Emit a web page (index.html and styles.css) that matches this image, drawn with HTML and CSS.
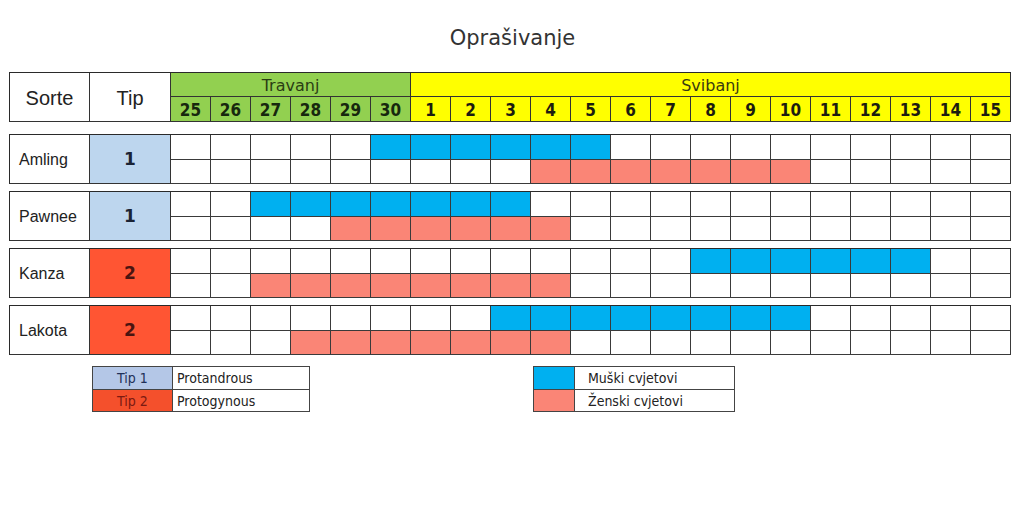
FILE: index.html
```html
<!DOCTYPE html>
<html lang="hr">
<head>
<meta charset="utf-8">
<title>Oprašivanje</title>
<link rel="stylesheet" href="styles.css">
</head>
<body>
<div class="page">
  <h1 class="title">Oprašivanje</h1>

  <div class="head">
    <div class="h-sorte">Sorte</div>
    <div class="h-tip">Tip</div>
    <div class="h-month apr">Travanj</div>
    <div class="h-month may">Svibanj</div>
    <div class="d apr">25</div><div class="d apr">26</div><div class="d apr">27</div><div class="d apr">28</div><div class="d apr">29</div><div class="d apr">30</div>
    <div class="d may">1</div><div class="d may">2</div><div class="d may">3</div><div class="d may">4</div><div class="d may">5</div><div class="d may">6</div><div class="d may">7</div><div class="d may">8</div><div class="d may">9</div><div class="d may">10</div><div class="d may">11</div><div class="d may">12</div><div class="d may">13</div><div class="d may">14</div><div class="d may">15</div>
  </div>

  <div class="rows">
    <div class="block">
      <div class="name">Amling</div>
      <div class="tip t1">1</div>
      <span></span><span></span><span></span><span></span><span></span><span class="m"></span><span class="m"></span><span class="m"></span><span class="m"></span><span class="m"></span><span class="m"></span><span></span><span></span><span></span><span></span><span></span><span></span><span></span><span></span><span></span><span></span>
      <span></span><span></span><span></span><span></span><span></span><span></span><span></span><span></span><span></span><span class="z"></span><span class="z"></span><span class="z"></span><span class="z"></span><span class="z"></span><span class="z"></span><span class="z"></span><span></span><span></span><span></span><span></span><span></span>
    </div>
    <div class="block">
      <div class="name">Pawnee</div>
      <div class="tip t1">1</div>
      <span></span><span></span><span class="m"></span><span class="m"></span><span class="m"></span><span class="m"></span><span class="m"></span><span class="m"></span><span class="m"></span><span></span><span></span><span></span><span></span><span></span><span></span><span></span><span></span><span></span><span></span><span></span><span></span>
      <span></span><span></span><span></span><span></span><span class="z"></span><span class="z"></span><span class="z"></span><span class="z"></span><span class="z"></span><span class="z"></span><span></span><span></span><span></span><span></span><span></span><span></span><span></span><span></span><span></span><span></span><span></span>
    </div>
    <div class="block">
      <div class="name">Kanza</div>
      <div class="tip t2">2</div>
      <span></span><span></span><span></span><span></span><span></span><span></span><span></span><span></span><span></span><span></span><span></span><span></span><span></span><span class="m"></span><span class="m"></span><span class="m"></span><span class="m"></span><span class="m"></span><span class="m"></span><span></span><span></span>
      <span></span><span></span><span class="z"></span><span class="z"></span><span class="z"></span><span class="z"></span><span class="z"></span><span class="z"></span><span class="z"></span><span class="z"></span><span></span><span></span><span></span><span></span><span></span><span></span><span></span><span></span><span></span><span></span><span></span>
    </div>
    <div class="block">
      <div class="name">Lakota</div>
      <div class="tip t2">2</div>
      <span></span><span></span><span></span><span></span><span></span><span></span><span></span><span></span><span class="m"></span><span class="m"></span><span class="m"></span><span class="m"></span><span class="m"></span><span class="m"></span><span class="m"></span><span class="m"></span><span></span><span></span><span></span><span></span><span></span>
      <span></span><span></span><span></span><span class="z"></span><span class="z"></span><span class="z"></span><span class="z"></span><span class="z"></span><span class="z"></span><span class="z"></span><span></span><span></span><span></span><span></span><span></span><span></span><span></span><span></span><span></span><span></span><span></span>
    </div>
  </div>

  <div class="legends">
    <div class="legend lg-tip">
      <div class="key k-t1">Tip 1</div><div class="lbl">Protandrous</div>
      <div class="key k-t2">Tip 2</div><div class="lbl">Protogynous</div>
    </div>
    <div class="legend lg-flw">
      <div class="key k-m"></div><div class="lbl">Muški cvjetovi</div>
      <div class="key k-z"></div><div class="lbl">Ženski cvjetovi</div>
    </div>
  </div>
</div>
</body>
</html>
```

FILE: styles.css
```css
* { box-sizing: border-box; }
html, body { margin: 0; padding: 0; background: #fff; }
body { width: 1024px; height: 522px; overflow: hidden; }

.page { padding-left: 9px; }

.title {
  margin: 0;
  padding-top: 25px;
  height: 72px;
  font: normal 21px/26px "DejaVu Sans", sans-serif;
  color: #333;
  text-align: center;
  padding-right: 8px;
}

.head, .block {
  display: grid;
  grid-template-columns: 80px 81px repeat(21, 40px);
  width: 1002px;
  border-top: 1px solid #2a2a2a;
  border-left: 1px solid #2a2a2a;
}
.head { grid-template-rows: 24px 25px; }
.block { grid-template-rows: 25px 24px; }
.head > *, .block > * {
  border-right: 1px solid #333;
  border-bottom: 1px solid #333;
}

.h-sorte, .h-tip {
  grid-row: span 2;
  display: flex; align-items: center; justify-content: center;
  font: 20px "Liberation Sans", Arial, sans-serif;
  color: #222;
  padding-top: 2px;
}
.h-month {
  display: flex; align-items: center; justify-content: center;
  font: 16px "DejaVu Sans", sans-serif;
  padding-top: 1px;
}
.h-month.apr { grid-column: span 6; background: #92d050; color: #2a3d14; }
.h-month.may { grid-column: span 15; background: #ffff00; color: #3a3a10; }
.apr { background: #92d050; }
.may { background: #ffff00; }
.d {
  display: flex; align-items: center; justify-content: center;
  font: bold 17px "DejaVu Sans Condensed", "DejaVu Sans", sans-serif;
  color: #17280e;
  padding-top: 1px;
}
.d.may { color: #1c1c10; }

.rows {
  display: flex; flex-direction: column; gap: 7px;
  margin-top: 12px;
}

.name {
  grid-row: span 2;
  display: flex; align-items: center;
  padding-left: 9px; padding-top: 1px;
  font: 16px "Liberation Sans", Arial, sans-serif;
  color: #222;
}
.tip {
  grid-row: span 2;
  display: flex; align-items: center; justify-content: center;
  font: bold 17px "DejaVu Sans", sans-serif;
}
.t1 { background: #bdd6ee; color: #1a2334; }
.t2 { background: #ff5533; color: #4a1410; }

.block span { display: block; background: #fff; border-color: #3a3a3a; }
.block span.m { background: #00b0f0; }
.block span.z { background: #fa8576; }

.legends {
  display: flex;
  gap: 223px;
  margin-top: 11px;
  padding-left: 83px;
}
.legend {
  display: grid;
  grid-template-rows: 23px 22px;
  border-top: 1px solid #444;
  border-left: 1px solid #444;
}
.legend > * {
  border-right: 1px solid #444;
  border-bottom: 1px solid #444;
  display: flex; align-items: center;
  font: 14px "DejaVu Sans Condensed", "DejaVu Sans", sans-serif;
  color: #222;
}
.lg-tip { grid-template-columns: 80px 137px; }
.lg-flw { grid-template-columns: 41px 160px; }
.lg-tip .lbl { padding-left: 4px; }
.lg-flw .lbl { padding-left: 13px; }
.key { justify-content: center; }
.k-t1 { background: #b4c7e7; color: #1f3058; }
.k-t2 { background: #f4502c; color: #7a1a12; }
.k-m { background: #00b0f0; }
.k-z { background: #fa8576; }
```
